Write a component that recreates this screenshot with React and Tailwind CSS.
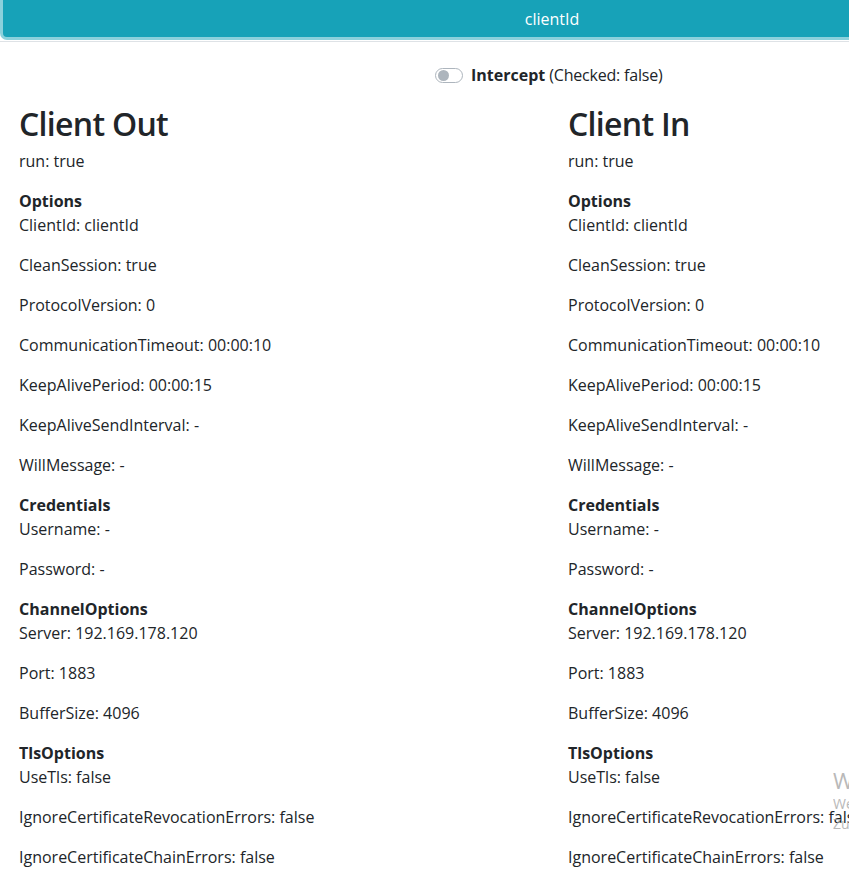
import React from "react";

const sections = [
  {
    title: "Options",
    items: [
      "ClientId: clientId",
      "CleanSession: true",
      "ProtocolVersion: 0",
      "CommunicationTimeout: 00:00:10",
      "KeepAlivePeriod: 00:00:15",
      "KeepAliveSendInterval: -",
      "WillMessage: -",
    ],
  },
  { title: "Credentials", items: ["Username: -", "Password: -"] },
  {
    title: "ChannelOptions",
    items: ["Server: 192.169.178.120", "Port: 1883", "BufferSize: 4096"],
  },
  {
    title: "TlsOptions",
    items: [
      "UseTls: false",
      "IgnoreCertificateRevocationErrors: false",
      "IgnoreCertificateChainErrors: false",
      "AllowUntrustedCertificates: false",
    ],
  },
];

function ClientColumn({ title }) {
  return (
    <div>
      <h2 className="pt-[2px] text-[32px] font-semibold tracking-[-0.7px] leading-[1.2] mb-[6px]">
        {title}
      </h2>
      <p className="leading-6 mb-4">run: true</p>
      {sections.map((s) => (
        <div key={s.title}>
          <h6 className="font-bold leading-6">{s.title}</h6>
          {s.items.map((item) => (
            <p key={item} className="leading-6 mb-4 whitespace-nowrap">
              {item}
            </p>
          ))}
        </div>
      ))}
    </div>
  );
}

export default function App() {
  return (
    <div
      className="relative h-[879px] overflow-hidden bg-white text-[16px] text-[#212529]"
      style={{ fontFamily: '"Open Sans", "Noto Sans", sans-serif' }}
    >
      <div className="w-[1104px]">
        {/* Header button */}
        <div className="pl-[3px] pb-[4px] border-b border-[#dee2e6]">
          <button className="w-[1098px] h-[37px] bg-[#17a2b8] text-white rounded-b ring-[3px] ring-[#8bd1dc] flex items-center justify-center">
            clientId
          </button>
        </div>

        {/* Intercept switch */}
        <div className="mt-[21px] pl-[435px] flex items-center h-6">
          <span className="w-[28px] h-[15px] rounded-full border border-[#adb5bd] bg-white flex items-center px-[2px]">
            <span className="w-[11px] h-[11px] rounded-full bg-[#adb5bd]"></span>
          </span>
          <span className="ml-[8px] font-bold">Intercept</span>
          <span className="ml-1 tracking-[-0.2px]">(Checked: false)</span>
        </div>

        {/* Clients */}
        <div className="mt-[16px] pl-[19px] grid grid-cols-[549px_549px]">
          <ClientColumn title="Client Out" />
          <ClientColumn title="Client In" />
        </div>
      </div>

      {/* Windows activation watermark */}
      <div className="absolute left-[833px] top-[766px] text-[#a8a8a8] opacity-80 whitespace-nowrap pointer-events-none">
        <p className="text-[22px] leading-[28px]">Windows aktivieren</p>
        <p className="text-[14px] leading-[20px]">Wechseln Sie zu den Einstellungen,</p>
        <p className="text-[14px] leading-[20px]">Zum Aktivieren von Windows.</p>
      </div>
    </div>
  );
}
